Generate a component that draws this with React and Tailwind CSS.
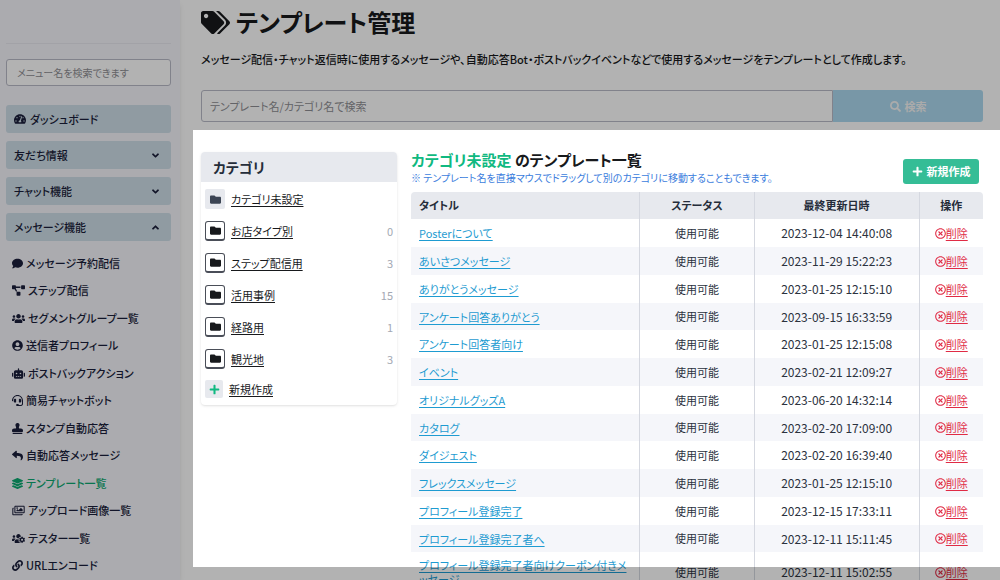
import React, { useState } from "react";
import {
  FaAngleDown,
  FaAngleUp,
  FaComment,
  FaFolder,
  FaHeadset,
  FaLayerGroup,
  FaLink,
  FaPlus,
  FaProjectDiagram,
  FaRegImages,
  FaRegTimesCircle,
  FaReply,
  FaRobot,
  FaSearch,
  FaStamp,
  FaTachometerAlt,
  FaTags,
  FaUserCircle,
  FaUsers,
  FaUsersCog,
} from "react-icons/fa";

const subMenus = [
  { label: "メッセージ予約配信", icon: FaComment },
  { label: "ステップ配信", icon: FaProjectDiagram, wide: true },
  { label: "セグメントグループ一覧", icon: FaUsers, wide: true },
  { label: "送信者プロフィール", icon: FaUserCircle },
  { label: "ポストバックアクション", icon: FaRobot, wide: true },
  { label: "簡易チャットボット", icon: FaHeadset },
  { label: "スタンプ自動応答", icon: FaStamp },
  { label: "自動応答メッセージ", icon: FaReply },
  { label: "テンプレート一覧", icon: FaLayerGroup, active: true },
  { label: "アップロード画像一覧", icon: FaRegImages, wide: true },
  { label: "テスター一覧", icon: FaUsersCog, wide: true },
  { label: "URLエンコード", icon: FaLink },
];

const categories = [
  { name: "お店タイプ別", count: 0 },
  { name: "ステップ配信用", count: 3 },
  { name: "活用事例", count: 15 },
  { name: "経路用", count: 1 },
  { name: "観光地", count: 3 },
];

const templates = [
  { title: "Posterについて", updated: "2023-12-04 14:40:08" },
  { title: "あいさつメッセージ", updated: "2023-11-29 15:22:23" },
  { title: "ありがとうメッセージ", updated: "2023-01-25 12:15:10" },
  { title: "アンケート回答ありがとう", updated: "2023-09-15 16:33:59" },
  { title: "アンケート回答者向け", updated: "2023-01-25 12:15:08" },
  { title: "イベント", updated: "2023-02-21 12:09:27" },
  { title: "オリジナルグッズA", updated: "2023-06-20 14:32:14" },
  { title: "カタログ", updated: "2023-02-20 17:09:00" },
  { title: "ダイジェスト", updated: "2023-02-20 16:39:40" },
  { title: "フレックスメッセージ", updated: "2023-01-25 12:15:10" },
  { title: "プロフィール登録完了", updated: "2023-12-15 17:33:11" },
  { title: "プロフィール登録完了者へ", updated: "2023-12-11 15:11:45" },
  {
    title: "プロフィール登録完了者向けクーポン付きメッセージ",
    updated: "2023-12-11 15:02:55",
  },
];

const MenuButton = ({ label, open }) => (
  <button
    aria-expanded={!!open}
    className="flex h-7 w-full items-center justify-between rounded-[3px] bg-[#cfdee8] px-2 font-medium"
  >
    {label}
    {open ? <FaAngleUp className="mr-0.5" /> : <FaAngleDown className="mr-0.5" />}
  </button>
);

const Sidebar = () => {
  const [menuQuery, setMenuQuery] = useState("");

  return (
    <aside className="w-[180px] shrink-0 bg-[#f5f5fb] pr-[9px] pl-1.5 text-[#1b1f3b] shadow-md">
      <div className="mb-[15px] h-11 border-b border-[#e8e8ef]"></div>
      <input
        type="text"
        aria-label="メニュー名を検索"
        className="block h-[27px] w-full rounded-[3px] border border-[#b9bbc8] bg-white px-2.5 text-[10px] placeholder:text-[#8f8f94]"
        placeholder="メニュー名を検索できます"
        value={menuQuery}
        onChange={(e) => setMenuQuery(e.target.value)}
      />
      <nav className="mt-[19px]">
        <div className="flex flex-col gap-2">
          <a
            href="#dashboard"
            className="flex h-7 items-center gap-1 rounded-[3px] bg-[#cfdee8] px-2 font-medium"
          >
            <FaTachometerAlt className="size-3" />
            ダッシュボード
          </a>
          <MenuButton label="友だち情報" />
          <MenuButton label="チャット機能" />
          <MenuButton label="メッセージ機能" open />
        </div>
        <ul className="mt-2">
          {subMenus.map(({ label, icon: Icon, wide, active }) => (
            <li key={label} className="h-7 even:h-[27px]">
              <a
                href="#menu"
                className={`flex h-full items-center gap-[3px] px-1.5 font-medium ${
                  active ? "text-[#0ca971]" : ""
                }`}
              >
                <Icon className={wide ? "h-[11px] w-[13px]" : "size-[11px]"} />
                {label}
              </a>
            </li>
          ))}
        </ul>
      </nav>
    </aside>
  );
};

const CategoryPanel = () => (
  <section className="w-[196px] shrink-0 self-start rounded-sm shadow">
    <h2 className="flex h-[30px] items-center rounded-t-sm bg-[#e7e9ee] px-3 text-sm font-bold text-[#252d3a]">
      カテゴリ
    </h2>
    <ul className="px-1 pt-px pb-0.5">
      <li className="flex h-8 items-center gap-1.5">
        <span className="flex size-5 items-center justify-center rounded-xs bg-[#e7e9ee]">
          <FaFolder className="text-[#3c4554]" />
        </span>
        <a href="#category" className="underline underline-offset-2">
          カテゴリ未設定
        </a>
      </li>
      {categories.map((category) => (
        <li key={category.name} className="flex h-8 items-center gap-1.5">
          <button
            aria-label="カテゴリ編集"
            className="flex size-5 items-center justify-center rounded-[3px] border border-b-2 border-[#4a4e58]"
          >
            <FaFolder />
          </button>
          <a href="#category" className="underline underline-offset-2">
            {category.name}
          </a>
          <span className="ml-auto text-[#a3a8b3]">{category.count}</span>
        </li>
      ))}
      <li className="flex h-7 items-center gap-1.5">
        <span className="flex size-[18px] items-center justify-center rounded-xs bg-[#e7e9ee]">
          <FaPlus className="text-[#10b981]" />
        </span>
        <a href="#new" className="underline underline-offset-2">
          新規作成
        </a>
      </li>
    </ul>
  </section>
);

const TemplateTable = () => (
  <table className="mt-1.5 w-full table-fixed text-[#2b323e]">
    <thead>
      <tr className="h-[27px] text-[#252d3a]">
        <th className="w-[40%] rounded-tl-sm bg-[#e7e9ee] px-2 text-left font-bold">
          タイトル
        </th>
        <th className="w-[20%] border-l border-[#d5d8e0] bg-[#e7e9ee] font-bold">
          ステータス
        </th>
        <th className="border-l border-[#d5d8e0] bg-[#e7e9ee] font-bold">最終更新日時</th>
        <th className="w-16 rounded-tr-sm border-l border-[#d5d8e0] bg-[#e7e9ee] font-bold">
          操作
        </th>
      </tr>
    </thead>
    <tbody>
      {templates.map((template) => (
        <tr key={template.title} className="h-7 even:bg-[#f5f6fa] nth-[4n]:h-[27px]">
          <td className="px-2 py-1.5">
            <a
              href="#template"
              className="block leading-[14px] text-[#1e9bd1] underline underline-offset-2"
            >
              {template.title}
            </a>
          </td>
          <td className="border-l border-[#d5d8e0] text-center">使用可能</td>
          <td className="border-l border-[#d5d8e0] text-center text-xs">
            {template.updated}
          </td>
          <td className="border-l border-[#d5d8e0]">
            <button className="mx-auto flex items-center text-[#e02b45]">
              <FaRegTimesCircle />
              <span className="underline underline-offset-2">削除</span>
            </button>
          </td>
        </tr>
      ))}
    </tbody>
  </table>
);

const App = () => {
  const [searchQuery, setSearchQuery] = useState("");

  return (
    <div className="relative flex h-screen overflow-hidden bg-white font-['Noto_Sans_CJK_JP',sans-serif] text-[11px] text-[#17191c] [font-feature-settings:'palt']">
      <Sidebar />
      <main className="min-w-0 flex-1 pr-[17px] pl-[21px]">
        <h1 className="flex h-11 items-center gap-1.5 text-2xl font-bold">
          <FaTags className="size-[29px]" />
          テンプレート管理
        </h1>
        <p className="mt-[5px] leading-5 font-medium">
          メッセージ配信・チャット返信時に使用するメッセージや、自動応答Bot・ポストバックイベントなどで使用するメッセージをテンプレートとして作成します。
        </p>
        <form className="mt-[21px] flex h-8" onSubmit={(e) => e.preventDefault()}>
          <input
            type="text"
            aria-label="テンプレート検索"
            className="min-w-0 flex-1 rounded-l-[3px] border border-[#b9bbc8] px-2 placeholder:text-[#8f8f94]"
            placeholder="テンプレート名/カテゴリ名で検索"
            value={searchQuery}
            onChange={(e) => setSearchQuery(e.target.value)}
          />
          <button className="flex w-[150px] items-center justify-center gap-1 rounded-r-[3px] bg-[#add9ef] font-bold text-[#f5f5f5]">
            <FaSearch />
            検索
          </button>
        </form>

        <div className="mt-[30px] flex gap-3.5">
          <CategoryPanel />
          <section className="min-w-0 flex-1">
            <div className="flex items-center justify-between pr-1">
              <div>
                <h2 className="text-[15px] leading-4 font-bold">
                  <span className="text-[#10b981]">カテゴリ未設定</span> のテンプレート一覧
                </h2>
                <p className="mt-0.5 text-[10px] leading-4 text-[#3b7ddd]">
                  ※ テンプレート名を直接マウスでドラッグして別のカテゴリに移動することもできます。
                </p>
              </div>
              <button className="mt-1 flex h-[25px] w-[76px] items-center justify-center gap-1 rounded-[3px] bg-[#35bd96] font-bold text-white">
                <FaPlus />
                新規作成
              </button>
            </div>
            <TemplateTable />
          </section>
        </div>
      </main>

      {/* dims everything except the list area */}
      <div className="pointer-events-none absolute top-[130px] right-0 bottom-[13px] left-[193px] shadow-[0_0_0_9999px_rgba(0,0,0,0.3)]"></div>
    </div>
  );
};

export default App;
